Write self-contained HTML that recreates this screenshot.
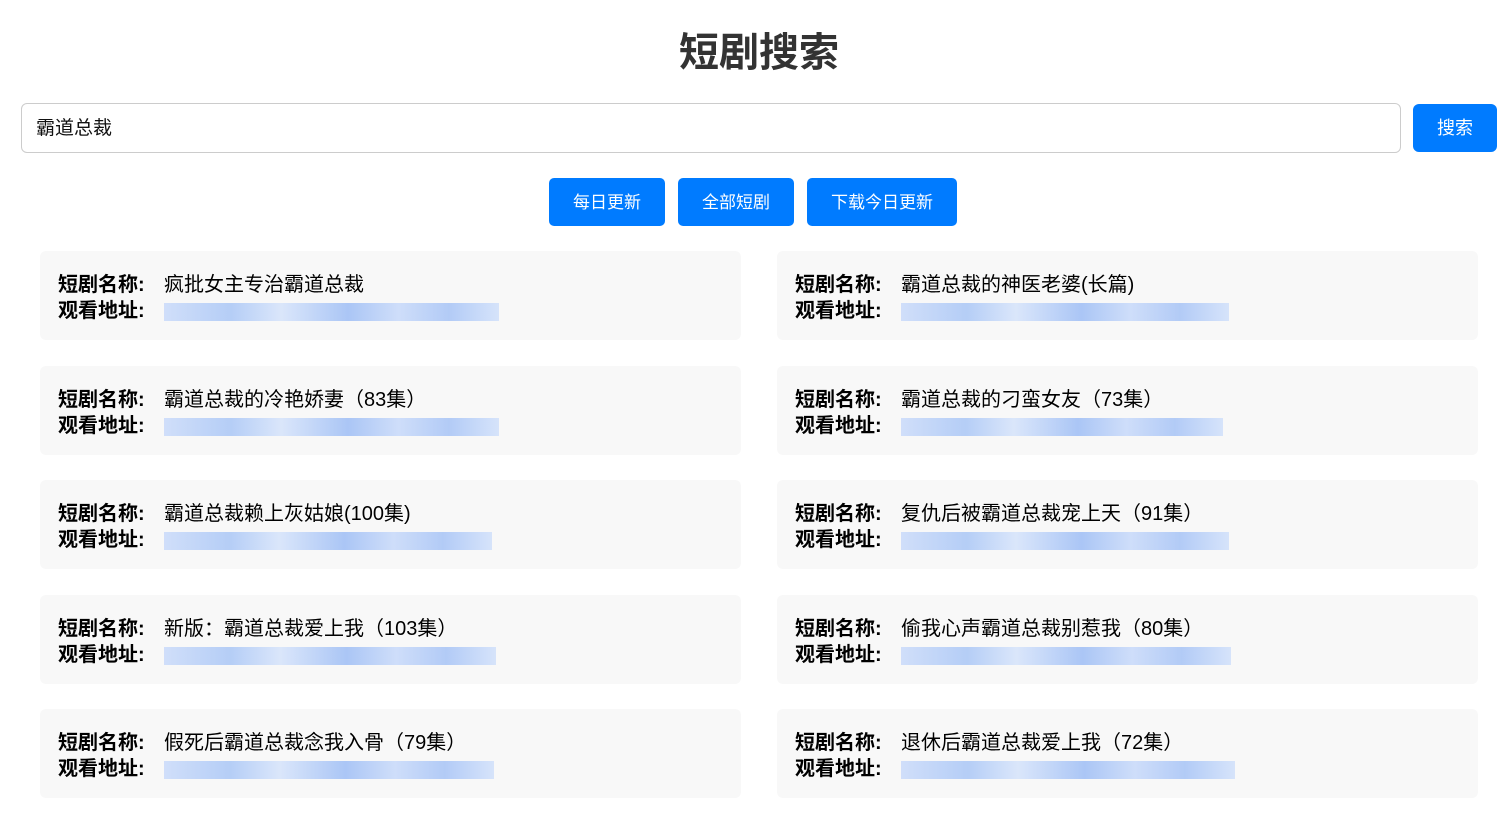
<!DOCTYPE html>
<html><head><meta charset="utf-8"><style>
*{box-sizing:border-box;margin:0;padding:0}
body{width:1503px;height:818px;background:#fff;font-family:"Liberation Sans","Noto Sans CJK SC",sans-serif;color:#000;position:relative;overflow:hidden}
h1{position:absolute;top:27px;left:0;width:1518px;text-align:center;font-size:40px;font-weight:bold;color:#333;line-height:52px}
.inp{position:absolute;left:21px;top:103px;width:1380px;height:50px;border:1px solid #ccc;border-radius:6px;font-size:19px;padding-left:14px;line-height:50px;color:#111}
.sb{position:absolute;left:1413px;top:104px;width:84px;height:48px;background:#007bff;border-radius:6px;color:#fff;font-size:18px;text-align:center;line-height:49px}
.b{position:absolute;top:178px;height:48px;background:#007bff;border-radius:5px;color:#fff;font-size:17px;text-align:center;line-height:50px}
.c{position:absolute;width:701px;height:89px;background:#f8f8f8;border-radius:6px;padding:21px 0 0 18px;font-size:20px;line-height:26px}
.c b{font-weight:bold;display:inline-block;width:106px}
.u{display:inline-block;vertical-align:middle;height:18px;width:335px;background:linear-gradient(90deg,#c9dafa,#a9c6f6 20%,#d5e3fb 35%,#9dbdf5 55%,#c7d9fa 70%,#a6c3f6 85%,#d0e0fb);opacity:.85}
</style></head><body>
<h1>短剧搜索</h1>
<div class="inp">霸道总裁</div>
<div class="sb">搜索</div>
<div class="b" style="left:549px;width:116px">每日更新</div>
<div class="b" style="left:678px;width:116px">全部短剧</div>
<div class="b" style="left:807px;width:150px">下载今日更新</div>

<div class="c" style="left:40px;top:251px"><b>短剧名称:</b>疯批女主专治霸道总裁<br><b>观看地址:</b><span class="u"></span></div>
<div class="c" style="left:777px;top:251px"><b>短剧名称:</b>霸道总裁的神医老婆(长篇)<br><b>观看地址:</b><span class="u" style="width:328px"></span></div>
<div class="c" style="left:40px;top:366px"><b>短剧名称:</b>霸道总裁的冷艳娇妻（83集）<br><b>观看地址:</b><span class="u"></span></div>
<div class="c" style="left:777px;top:366px"><b>短剧名称:</b>霸道总裁的刁蛮女友（73集）<br><b>观看地址:</b><span class="u" style="width:322px"></span></div>
<div class="c" style="left:40px;top:480px"><b>短剧名称:</b>霸道总裁赖上灰姑娘(100集)<br><b>观看地址:</b><span class="u" style="width:328px"></span></div>
<div class="c" style="left:777px;top:480px"><b>短剧名称:</b>复仇后被霸道总裁宠上天（91集）<br><b>观看地址:</b><span class="u" style="width:328px"></span></div>
<div class="c" style="left:40px;top:595px"><b>短剧名称:</b>新版：霸道总裁爱上我（103集）<br><b>观看地址:</b><span class="u" style="width:332px"></span></div>
<div class="c" style="left:777px;top:595px"><b>短剧名称:</b>偷我心声霸道总裁别惹我（80集）<br><b>观看地址:</b><span class="u" style="width:330px"></span></div>
<div class="c" style="left:40px;top:709px"><b>短剧名称:</b>假死后霸道总裁念我入骨（79集）<br><b>观看地址:</b><span class="u" style="width:330px"></span></div>
<div class="c" style="left:777px;top:709px"><b>短剧名称:</b>退休后霸道总裁爱上我（72集）<br><b>观看地址:</b><span class="u" style="width:334px"></span></div>
</body></html>
